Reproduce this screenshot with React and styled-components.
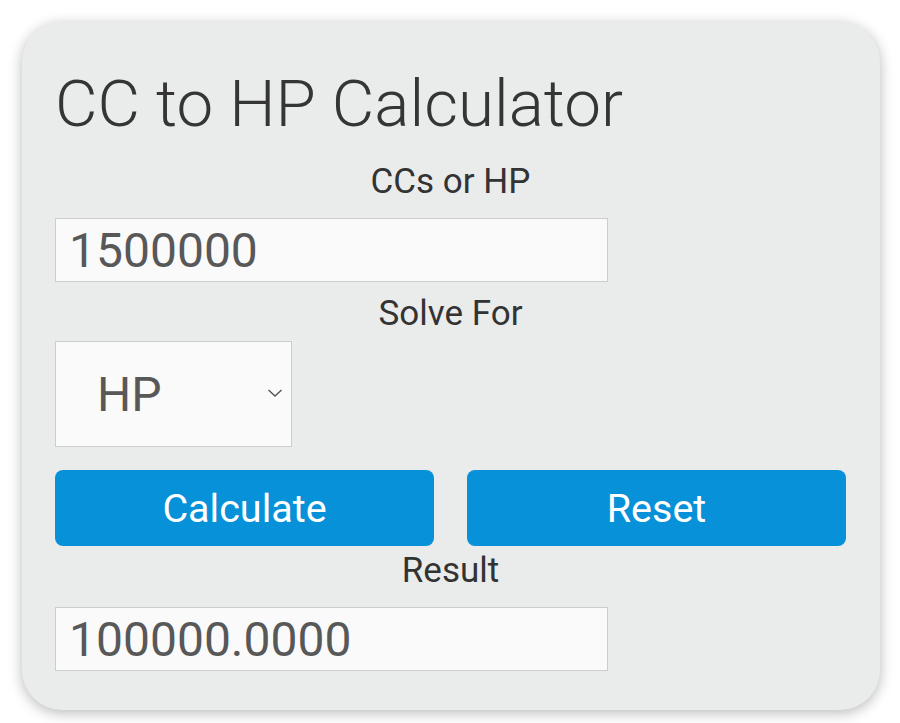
import React from "react";
import styled, { createGlobalStyle } from "styled-components";

const Global = createGlobalStyle`
  html, body { margin: 0; padding: 0; background: #ffffff; }
  body { font-family: Roboto, "Liberation Sans", Arial, sans-serif; }
  * { box-sizing: border-box; }
`;

const Page = styled.div`
  padding: 22px 20px 13px 22px;
`;

const Card = styled.form`
  width: 858px;
  height: 688px;
  background: #eaecec;
  border-radius: 40px;
  box-shadow: 0 3px 14px rgba(0, 0, 0, 0.28);
  padding: 44px 34px 0 33px;
  display: flex;
  flex-direction: column;
  align-items: stretch;
`;

const Title = styled.h1`
  margin: 0;
  font-family: Roboto, "Liberation Sans", sans-serif;
  font-weight: 300;
  font-size: 65.5px;
  line-height: 75px;
  color: #353535;
  white-space: nowrap;
`;

const Label = styled.label`
  display: block;
  margin-top: ${(p) => p.$top}px;
  text-align: center;
  font-size: 35px;
  line-height: 42px;
  color: #333333;
`;

const TextField = styled.input`
  margin-top: ${(p) => p.$top}px;
  width: 553px;
  height: 64px;
  border: 1px solid #cdcdcd;
  background: #fafafa;
  padding: 0 13px;
  font-family: Roboto, "Liberation Sans", sans-serif;
  font-size: 48px;
  color: #585858;
  outline: none;
`;

const SelectWrap = styled.div`
  position: relative;
  margin-top: 6px;
  width: 237px;
  height: 106px;
`;

const Select = styled.select`
  appearance: none;
  -webkit-appearance: none;
  width: 100%;
  height: 100%;
  border: 1px solid #cdcdcd;
  background: #fafafa;
  padding: 0 0 0 41px;
  font-family: Roboto, "Liberation Sans", sans-serif;
  font-size: 48px;
  color: #585858;
  outline: none;
  border-radius: 0;
`;

const Chevron = styled.svg`
  position: absolute;
  right: 9px;
  top: 47px;
  pointer-events: none;
`;

const ButtonRow = styled.div`
  margin-top: 23px;
  display: grid;
  grid-template-columns: 1fr 1fr;
  column-gap: 33px;
`;

const Button = styled.button`
  height: 76px;
  border: none;
  border-radius: 8px;
  background: #0791d9;
  color: #ffffff;
  font-family: Roboto, "Liberation Sans", sans-serif;
  font-size: 39.5px;
  cursor: pointer;
`;

export default function App() {
  return (
    <Page>
      <Global />
      <Card onSubmit={(e) => e.preventDefault()}>
        <Title>CC to HP Calculator</Title>
        <Label $top={20}>CCs or HP</Label>
        <TextField $top={15} defaultValue="1500000" />
        <Label $top={11}>Solve For</Label>
        <SelectWrap>
          <Select defaultValue="HP">
            <option value="HP">HP</option>
            <option value="CC">CC</option>
          </Select>
          <Chevron width="16" height="10" viewBox="0 0 16 10">
            <path d="M1.5 2 L8 8 L14.5 2" fill="none" stroke="#555" strokeWidth="1.4" />
          </Chevron>
        </SelectWrap>
        <ButtonRow>
          <Button type="button">Calculate</Button>
          <Button type="button">Reset</Button>
        </ButtonRow>
        <Label $top={4}>Result</Label>
        <TextField $top={15} defaultValue="100000.0000" readOnly />
      </Card>
    </Page>
  );
}
